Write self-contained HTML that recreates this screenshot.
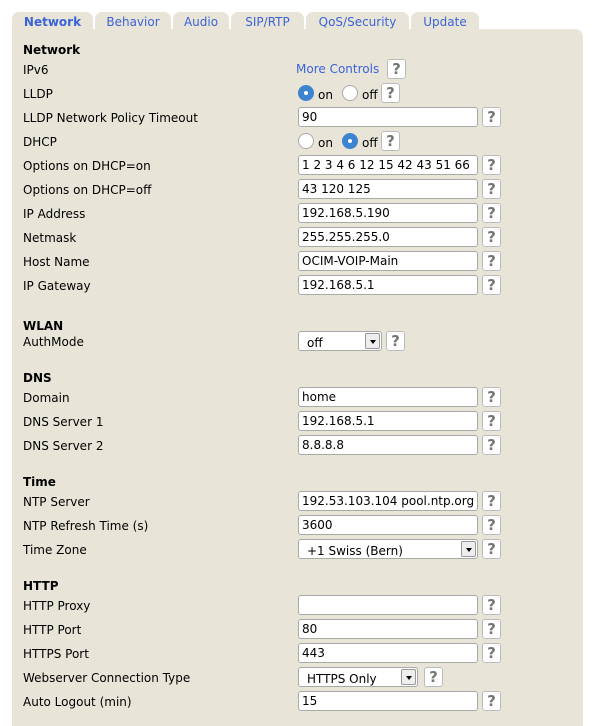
<!DOCTYPE html>
<html><head><meta charset="utf-8"><style>
*{box-sizing:border-box}
body{margin:0;width:604px;height:726px;background:#fff;font-family:"DejaVu Sans","Liberation Sans",sans-serif;font-size:12px;color:#000;position:relative;overflow:hidden}
.panel{position:absolute;left:12px;top:29px;width:571px;height:697px;background:#e8e5d8;border-radius:0 8px 0 0}
.tab{position:absolute;top:12px;height:20px;background:#e8e5d8;border-radius:7px 7px 0 0;color:#3b63d8;font-size:12px;text-align:center;line-height:20px}
.l{position:absolute;left:23px;line-height:14px;margin-top:1px}
.h{font-weight:bold}
.in{position:absolute;left:298px;width:180px;height:20px;background:#fff;border:1px solid #a9a9a9;border-radius:3px;padding-left:3px;line-height:19px;white-space:nowrap;overflow:hidden}
.q{position:absolute;width:19px;height:20px;background:#fff;border:1px solid #bbb;border-radius:3px;text-align:center;font-weight:bold;color:#777;font-size:15px;line-height:18px}
.sel{position:absolute;left:298px;height:20px;background:#fff;border:1px solid #a9a9a9;border-radius:3px;padding-left:8px;line-height:22px;overflow:hidden}
.arr{position:absolute;right:1px;top:1px;width:15px;height:16px;background:#eee;border:1px solid #999;border-radius:2px}
.arr:after{content:"";position:absolute;left:4px;top:6px;border:3px solid transparent;border-top:4px solid #000;border-bottom:0}
.rad{position:absolute;width:16px;height:16px;border-radius:50%;background:#fff;border:1px solid #aaa}
.rad.on{background:#3d84d0;border-color:#3d84d0}
.rad.on:after{content:"";position:absolute;left:5px;top:5px;width:4px;height:4px;border-radius:50%;background:#fff}
.t{position:absolute;line-height:14px;margin-top:1px}
</style></head><body>
<div class="panel"></div>
<div class="tab" style="left:12px;width:81px;font-weight:bold">Network</div>
<div class="tab" style="left:95px;width:76px">Behavior</div>
<div class="tab" style="left:173px;width:56px">Audio</div>
<div class="tab" style="left:231px;width:73px">SIP/RTP</div>
<div class="tab" style="left:306px;width:103px">QoS/Security</div>
<div class="tab" style="left:411px;width:68px">Update</div>

<div class="l h" style="top:42px">Network</div>
<div class="l" style="top:62px">IPv6</div>
<div class="t" style="left:296px;top:61px;color:#3b63d8">More Controls</div>
<div class="q" style="left:387px;top:59px">?</div>

<div class="l" style="top:86px">LLDP</div>
<div class="rad on" style="left:298px;top:85px"></div><div class="t" style="left:318px;top:87px">on</div>
<div class="rad" style="left:342px;top:85px"></div><div class="t" style="left:362px;top:87px">off</div>
<div class="q" style="left:381px;top:83px">?</div>

<div class="l" style="top:110px">LLDP Network Policy Timeout</div>
<div class="in" style="top:107px">90</div><div class="q" style="left:482px;top:107px">?</div>

<div class="l" style="top:134px">DHCP</div>
<div class="rad" style="left:298px;top:133px"></div><div class="t" style="left:318px;top:135px">on</div>
<div class="rad on" style="left:342px;top:133px"></div><div class="t" style="left:362px;top:135px">off</div>
<div class="q" style="left:381px;top:131px">?</div>

<div class="l" style="top:158px">Options on DHCP=on</div>
<div class="in" style="top:155px">1 2 3 4 6 12 15 42 43 51 66</div><div class="q" style="left:482px;top:155px">?</div>
<div class="l" style="top:182px">Options on DHCP=off</div>
<div class="in" style="top:179px">43 120 125</div><div class="q" style="left:482px;top:179px">?</div>
<div class="l" style="top:206px">IP Address</div>
<div class="in" style="top:203px">192.168.5.190</div><div class="q" style="left:482px;top:203px">?</div>
<div class="l" style="top:230px">Netmask</div>
<div class="in" style="top:227px">255.255.255.0</div><div class="q" style="left:482px;top:227px">?</div>
<div class="l" style="top:254px">Host Name</div>
<div class="in" style="top:251px">OCIM-VOIP-Main</div><div class="q" style="left:482px;top:251px">?</div>
<div class="l" style="top:278px">IP Gateway</div>
<div class="in" style="top:275px">192.168.5.1</div><div class="q" style="left:482px;top:275px">?</div>

<div class="l h" style="top:318px">WLAN</div>
<div class="l" style="top:334px">AuthMode</div>
<div class="sel" style="top:331px;width:84px">off<div class="arr"></div></div><div class="q" style="left:386px;top:331px">?</div>

<div class="l h" style="top:370px">DNS</div>
<div class="l" style="top:390px">Domain</div>
<div class="in" style="top:387px">home</div><div class="q" style="left:482px;top:387px">?</div>
<div class="l" style="top:414px">DNS Server 1</div>
<div class="in" style="top:411px">192.168.5.1</div><div class="q" style="left:482px;top:411px">?</div>
<div class="l" style="top:438px">DNS Server 2</div>
<div class="in" style="top:435px">8.8.8.8</div><div class="q" style="left:482px;top:435px">?</div>

<div class="l h" style="top:474px">Time</div>
<div class="l" style="top:494px">NTP Server</div>
<div class="in" style="top:491px">192.53.103.104 pool.ntp.org</div><div class="q" style="left:482px;top:491px">?</div>
<div class="l" style="top:518px">NTP Refresh Time (s)</div>
<div class="in" style="top:515px">3600</div><div class="q" style="left:482px;top:515px">?</div>
<div class="l" style="top:542px">Time Zone</div>
<div class="sel" style="top:539px;width:180px">+1 Swiss (Bern)<div class="arr"></div></div><div class="q" style="left:482px;top:539px">?</div>

<div class="l h" style="top:578px">HTTP</div>
<div class="l" style="top:598px">HTTP Proxy</div>
<div class="in" style="top:595px"></div><div class="q" style="left:482px;top:595px">?</div>
<div class="l" style="top:622px">HTTP Port</div>
<div class="in" style="top:619px">80</div><div class="q" style="left:482px;top:619px">?</div>
<div class="l" style="top:646px">HTTPS Port</div>
<div class="in" style="top:643px">443</div><div class="q" style="left:482px;top:643px">?</div>
<div class="l" style="top:670px">Webserver Connection Type</div>
<div class="sel" style="top:667px;width:120px">HTTPS Only<div class="arr"></div></div><div class="q" style="left:424px;top:667px">?</div>
<div class="l" style="top:694px">Auto Logout (min)</div>
<div class="in" style="top:691px">15</div><div class="q" style="left:482px;top:691px">?</div>
</body></html>
